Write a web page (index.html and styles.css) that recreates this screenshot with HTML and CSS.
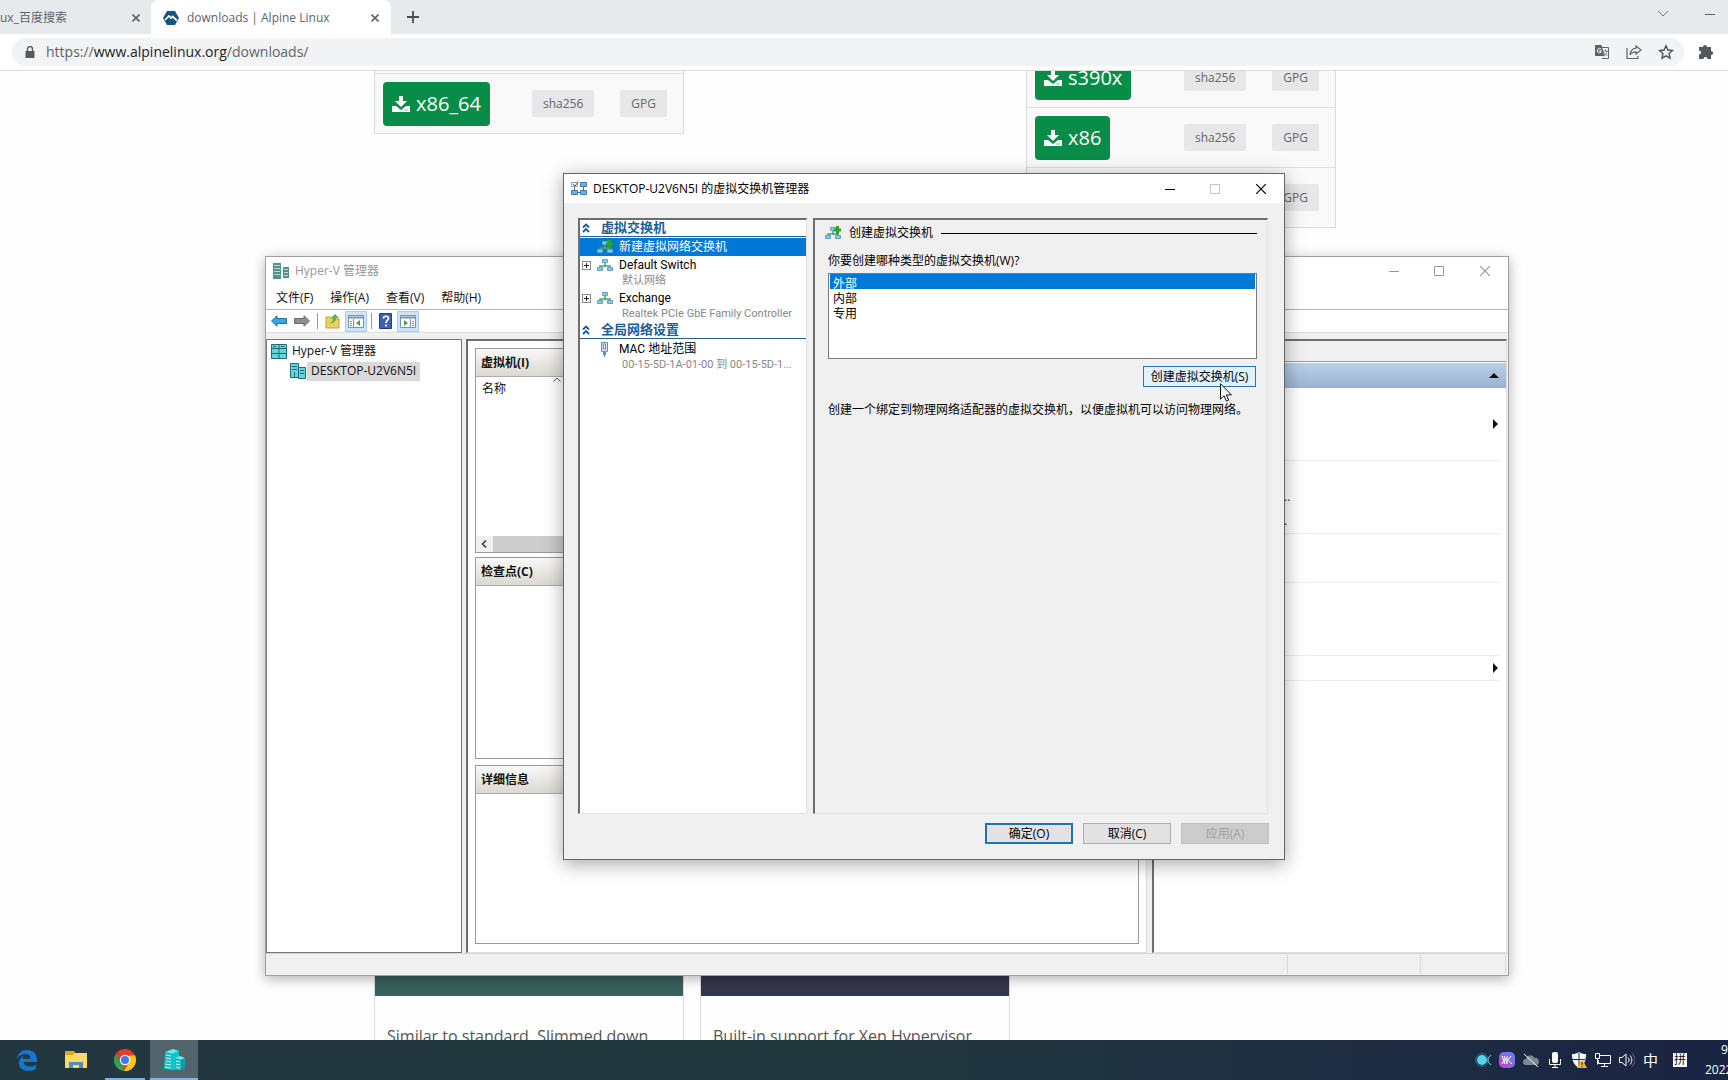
FILE: index.html
```html
<!DOCTYPE html>
<html lang="zh-CN">
<head>
<meta charset="utf-8">
<title>downloads | Alpine Linux</title>
<link rel="stylesheet" href="styles.css">
</head>
<body>
<svg width="0" height="0" class="defs" aria-hidden="true">
  <defs>
    <symbol id="i-close" viewBox="0 0 10 10"><path d="M1 1l8 8M9 1l-8 8" fill="none" stroke="currentColor"/></symbol>
    <symbol id="i-x" viewBox="0 0 8 8"><path d="M0.5 0.5l7 7M7.5 0.5l-7 7" fill="none" stroke="currentColor" stroke-width="1.6"/></symbol>
    <symbol id="i-min" viewBox="0 0 10 10"><path d="M0 5.5h10" stroke="currentColor"/></symbol>
    <symbol id="i-max" viewBox="0 0 10 10"><path d="M.5.5h9v9h-9z" fill="none" stroke="currentColor"/></symbol>
    <symbol id="i-download" viewBox="0 0 18 18"><path d="M7 1h4v5h4L9 12 3 6h4z" fill="currentColor"/><path d="M0 11h4l5 4 5-4h4v6H0z" fill="currentColor"/><path d="M12.500 15h1M14.500 15h1" stroke="#078d47"/></symbol>
    <symbol id="i-switch" viewBox="0 0 16 14"><path d="M8 5v4M3 10V8h10v2" fill="none" stroke="#4fa65c" stroke-width="1.500"/><path d="M5.500 1.500h5v3h-5zM.5 9.500h5v3h-5zM10.500 9.500h5v3h-5z" fill="#8ac6ea" stroke="#5ea3cf"/></symbol>
    <symbol id="i-switch-new" viewBox="0 0 16 14"><path d="M8 5v4M3 10V8h10v2" fill="none" stroke="#4fa65c" stroke-width="1.500"/><path d="M5.500 1.500h5v3h-5zM.5 9.500h5v3h-5zM10.500 9.500h5v3h-5z" fill="#8ac6ea" stroke="#5ea3cf"/><path d="M11 0h3v2.500h2v3h-2V8h-3V5.500H9v-3h2z" fill="#27a52c"/></symbol>
    <symbol id="i-collapse" viewBox="0 0 8 10"><path d="M1 4.500l3-3 3 3M1 9l3-3 3 3" fill="none" stroke="#1b5c93" stroke-width="1.800"/></symbol>
  </defs>
</svg>

<header class="browser">
  <nav class="tabs">
    <div class="tab tab-first"><a href="#">ux_百度搜索</a><button type="button" aria-label="关闭"><svg width="8" height="8"><use href="#i-x"/></svg></button></div>
    <div class="tab tab-active">
      <svg width="16" height="16" viewBox="0 0 16 16"><path d="M4 1h8l4 7-4 7H4L0 8z" fill="#17557c"/><path d="M2 10l4-4 2 2 1.500-1.500L14 10.500" fill="none" stroke="#fff" stroke-width="1.700"/></svg>
      <a href="#">downloads | Alpine Linux</a><button type="button" aria-label="关闭"><svg width="8" height="8"><use href="#i-x"/></svg></button>
    </div>
    <button class="new-tab" type="button" aria-label="新标签页"><svg width="12" height="12" viewBox="0 0 12 12"><path d="M6 0v12M0 6h12" stroke="#4a4d51" stroke-width="1.800"/></svg></button>
    <div class="browser-controls">
      <button type="button" aria-label="搜索标签页"><svg width="12" height="8" viewBox="0 0 12 8"><path d="M1 1l5 5 5-5" fill="none" stroke="#777"/></svg></button>
      <button type="button" aria-label="最小化"><svg width="10" height="10"><use href="#i-min"/></svg></button>
    </div>
  </nav>
  <div class="toolbar">
    <div class="address">
      <svg width="10" height="12" viewBox="0 0 10 12"><path d="M0.500 5h9v7h-9z" fill="#55585c"/><path d="M2.500 5V3a2.500 2.500 0 015 0v2" fill="none" stroke="#55585c" stroke-width="1.400"/></svg>
      <a class="url" href="#">https://<b>www.alpinelinux.org</b>/downloads/</a>
      <button type="button" aria-label="翻译"><svg width="16" height="16" viewBox="0 0 16 16"><path d="M7 3.500h7.500v11H8" fill="none" stroke="#5f6368"/><path d="M9 7h5M11.500 5.500V7M13 7c0 2-2 4-3.500 5M10 8.500l3.500 3.500" fill="none" stroke="#5f6368" stroke-width=".8"/><path d="M1 1h6.500l3 11H1z" fill="#5f6368"/><path d="M7 5a2.200 2.200 0 10.200 3V6.800H5" fill="none" stroke="#fff"/></svg></button>
      <button type="button" aria-label="分享"><svg width="16" height="16" viewBox="0 0 16 16"><path d="M1 4v10.500h11V12" fill="none" stroke="#5f6368" stroke-width="1.200"/><path d="M10 2l5 4-5 4V7.800C7 7.800 5 9 4 11c.3-4 3-6.500 6-6.800z" fill="none" stroke="#5f6368" stroke-width="1.200"/></svg></button>
      <button type="button" aria-label="收藏"><svg width="16" height="16" viewBox="0 0 16 16"><path d="M8 1.800l1.900 4.200 4.600.5-3.400 3.100.9 4.500-4-2.300-4 2.300.9-4.500-3.400-3.100 4.600-.5z" fill="none" stroke="#4c4f54" stroke-width="1.400"/></svg></button>
    </div>
    <button class="extensions" type="button" aria-label="扩展程序"><svg width="16" height="16" viewBox="0 0 16 16"><path d="M5 3a2 2 0 014 0h4v4a2.100 2.100 0 010 4.200V15H9.500a2 2 0 00-4 0H1v-4.500a2 2 0 000-4V3z" fill="#54575c"/></svg></button>
  </div>
</header>

<main class="page">
  <div class="columns">
    <section class="arches arches-end">
      <div class="arch"><a class="download" href="#"><svg width="18" height="18"><use href="#i-download"/></svg>x86_64</a><a class="check check-sha" href="#">sha256</a><a class="check" href="#">GPG</a></div>
    </section>
    <section class="arches arches-last">
      <div class="arch"><a class="download" href="#"><svg width="18" height="18"><use href="#i-download"/></svg>s390x</a><a class="check check-sha" href="#">sha256</a><a class="check" href="#">GPG</a></div>
      <div class="arch"><a class="download" href="#"><svg width="18" height="18"><use href="#i-download"/></svg>x86</a><a class="check check-sha" href="#">sha256</a><a class="check" href="#">GPG</a></div>
      <div class="arch"><a class="check" href="#">GPG</a></div>
    </section>
  </div>
  <div class="columns columns-next">
    <article class="flavor"><div class="banner banner-green"></div><p>Similar to standard. Slimmed down</p></article>
    <article class="flavor"><div class="banner banner-navy"></div><p>Built-in support for Xen Hypervisor.</p></article>
  </div>
</main>

<section class="window manager" aria-label="Hyper-V 管理器">
  <header class="titlebar">
    <svg width="16" height="16" viewBox="0 0 16 16"><path d="M0 0h8v16H0z" fill="#5a8f89"/><path d="M10 4h6v11h-6z" fill="#5a8f89"/><path d="M1 2.500h6M1 5.500h6M1 8.500h6M1 11.500h6M11 6.500h4M11 9.500h4M11 12.500h4" stroke="#b9dcd8"/></svg>
    <h1>Hyper-V 管理器</h1>
    <div class="controls">
      <button type="button" aria-label="最小化"><svg width="10" height="10"><use href="#i-min"/></svg></button>
      <button type="button" aria-label="最大化"><svg width="10" height="10"><use href="#i-max"/></svg></button>
      <button type="button" aria-label="关闭"><svg width="12" height="12"><use href="#i-close"/></svg></button>
    </div>
  </header>
  <nav class="menu"><button type="button">文件(F)</button><button type="button">操作(A)</button><button type="button">查看(V)</button><button type="button">帮助(H)</button></nav>
  <div class="tools">
    <button type="button" aria-label="后退"><svg width="16" height="12" viewBox="0 0 16 12"><path d="M.5 6L6 .8V3.500h9.500v5H6v2.700z" fill="#39a5e8" stroke="#276da5"/></svg></button>
    <button type="button" aria-label="前进"><svg width="16" height="12" viewBox="0 0 16 12"><path d="M15.500 6L10 .8V3.500H.5v5H10v2.700z" fill="#8e8e8e" stroke="#6a6a6a"/></svg></button>
    <i class="sep"></i>
    <button type="button" aria-label="向上"><svg width="16" height="16" viewBox="0 0 16 16"><path d="M1 4h5l1 2h7v9H1z" fill="#f0cf62" stroke="#c29d3d"/><path d="M3 10c4 0 5-2 5-5H6l4-4 4 4h-3c0 4-3 6-8 5z" fill="#58b646"/></svg></button>
    <button class="on" type="button" aria-label="显示/隐藏控制台树"><svg width="16" height="13" viewBox="0 0 16 13"><path d="M.5.5h15v12H.5z" fill="#fff" stroke="#7f93a8"/><path d="M0 2.500h16" stroke="#7f93a8" stroke-width="2"/><path d="M5.500 4v8M2 6.500h2M2 8.500h2M2 10.500h2" stroke="#7f93a8"/><path d="M12 5v6L8 8z" fill="#45a04a"/></svg></button>
    <i class="sep"></i>
    <button type="button" aria-label="帮助"><svg width="14" height="16" viewBox="0 0 14 16"><path d="M.5.500h12v15H.5z" fill="#4160b4" stroke="#263b84"/><path d="M4.500 5.500c0-3 5-3 5 0 0 2-2.500 2-2.500 4.500M7 11.500v2" fill="none" stroke="#fff" stroke-width="1.700"/></svg></button>
    <button class="on" type="button" aria-label="显示/隐藏操作窗格"><svg width="16" height="13" viewBox="0 0 16 13"><path d="M.5.5h15v12H.5z" fill="#fff" stroke="#7f93a8"/><path d="M0 2.500h16" stroke="#7f93a8" stroke-width="2"/><path d="M10.500 4v8M12 6.500h2M12 8.500h2M12 10.500h2" stroke="#7f93a8"/><path d="M4 5v6l4-3z" fill="#45a04a"/></svg></button>
  </div>
  <div class="panes">
    <ul class="tree">
      <li><svg width="16" height="16" viewBox="0 0 16 16"><path d="M.5 1.500h15v14H.5z" fill="#5fd9dd" stroke="#27666f"/><path d="M8 1v15M.5 5.500h15M.5 10.500h15M2 3.500h3M10 3.500h3" stroke="#27666f"/></svg><span>Hyper-V 管理器</span></li>
      <li class="leaf"><svg width="16" height="16" viewBox="0 0 16 16"><path d="M.5.500h8v14h-8zM8.500 4.500h7v11h-7z" fill="#5fd9dd" stroke="#27666f"/><path d="M2 3.500h5M2 6.500h5M10 7.500h4M10 10.500h4M4.500 9v5" stroke="#27666f"/></svg><span class="selected">DESKTOP-U2V6N5I</span></li>
    </ul>
    <div class="center">
      <section class="box"><h2>虚拟机(I)</h2><div class="column-head">名称</div><svg class="sort" width="8" height="5" viewBox="0 0 8 5"><path d="M.5 4.500L4 1l3.500 3.500" fill="none" stroke="#555"/></svg>
        <div class="scroll"><svg width="6" height="8" viewBox="0 0 6 8"><path d="M5 .5L1.500 4 5 7.500" fill="none" stroke="#444" stroke-width="1.700"/></svg><i></i></div></section>
      <section class="box"><h2>检查点(C)</h2></section>
      <section class="box"><h2>详细信息</h2></section>
    </div>
    <aside class="actions">
      <div class="actions-head"></div>
      <div class="actions-bar"><svg width="10" height="5" viewBox="0 0 10 5"><path d="M5 0l5 5H0z" fill="#111"/></svg></div>
      <ul><li></li><li><svg width="5" height="10" viewBox="0 0 5 10"><path d="M0 0l5 5-5 5z" fill="#111"/></svg></li><li></li></ul>
      <ul><li></li><li><span class="cut">..</span></li><li><span class="cut">.</span></li></ul>
      <ul><li></li><li></li></ul>
      <ul><li></li><li></li><li></li></ul>
      <ul><li><svg width="5" height="10" viewBox="0 0 5 10"><path d="M0 0l5 5-5 5z" fill="#111"/></svg></li></ul>
    </aside>
  </div>
  <footer class="status"><i></i><i></i><i></i></footer>
</section>

<section class="window dialog" role="dialog" aria-label="虚拟交换机管理器">
  <header class="titlebar">
    <svg width="16" height="15" viewBox="0 0 16 15"><path d="M9.500 1.500h6v4h-6zM.5 9.500h6v4h-6zM9.500 9.500h6v4h-6z" fill="#69b4e4" stroke="#3f7ba8"/><path d="M.5 1.500h6v4h-6z" fill="#fff" stroke="#8aa4b8"/><path d="M2 3l2 2 3.500-4.500" fill="none" stroke="#555"/><path d="M3.500 6v3M12.500 6v3M7 11.500h2" stroke="#3f7ba8"/></svg>
    <h1>DESKTOP-U2V6N5I 的虚拟交换机管理器</h1>
    <div class="controls">
      <button type="button" aria-label="最小化"><svg width="10" height="10"><use href="#i-min"/></svg></button>
      <button type="button" aria-label="最大化" disabled><svg width="10" height="10"><use href="#i-max"/></svg></button>
      <button type="button" aria-label="关闭"><svg width="12" height="12"><use href="#i-close"/></svg></button>
    </div>
  </header>
  <div class="dialog-body">
    <div class="dialog-panes">
      <nav class="switches">
        <h2><svg width="8" height="10"><use href="#i-collapse"/></svg>虚拟交换机</h2>
        <div class="item item-on"><i></i><svg width="16" height="14"><use href="#i-switch-new"/></svg><span>新建虚拟网络交换机</span></div>
        <div class="item"><i class="plus"></i><svg width="16" height="14"><use href="#i-switch"/></svg><span>Default Switch</span></div>
        <p>默认网络</p>
        <div class="item"><i class="plus"></i><svg width="16" height="14"><use href="#i-switch"/></svg><span>Exchange</span></div>
        <p>Realtek PCIe GbE Family Controller</p>
        <h2><svg width="8" height="10"><use href="#i-collapse"/></svg>全局网络设置</h2>
        <div class="item"><i></i><svg width="16" height="16" viewBox="0 0 16 16"><path d="M4.500 1.500h6v9h-6z" fill="#d5dde8" stroke="#7d8ba3"/><path d="M6.500 3h2v5h-2z" fill="#fff" stroke="#7d8ba3"/><path d="M6 11h3v3H6z" fill="#4d93bb"/><path d="M7.500 14v2" stroke="#4d93bb"/></svg><span>MAC 地址范围</span></div>
        <p>00-15-5D-1A-01-00 到 00-15-5D-1...</p>
      </nav>
      <form class="create" id="create">
        <h3><svg width="16" height="14"><use href="#i-switch-new"/></svg>创建虚拟交换机</h3>
        <label for="kind">你要创建哪种类型的虚拟交换机(W)?</label>
        <select id="kind" size="5"><option selected>外部</option><option>内部</option><option>专用</option></select>
        <button class="btn btn-hot" type="button">创建虚拟交换机(S)</button>
        <p>创建一个绑定到物理网络适配器的虚拟交换机，以便虚拟机可以访问物理网络。</p>
      </form>
    </div>
    <footer class="buttons">
      <button class="btn btn-default" type="button">确定(O)</button>
      <button class="btn" type="button">取消(C)</button>
      <button class="btn" type="button" disabled>应用(A)</button>
    </footer>
  </div>
</section>

<footer class="taskbar">
  <button class="task" type="button" aria-label="Edge"><svg width="22" height="22" viewBox="0 0 22 22"><path d="M1 9.500C2 4 6 1 11 1c6 0 10 4 10 10v2H7.500c.3 3 3 4.500 6.500 4.500 2.500 0 4.500-.7 6-1.500v4c-2 1.200-4.500 1.800-7.500 1.800C6.500 21.800 3 18.500 3 14c0-3.500 2-6 5-7.500-1 1-1.300 2-1.400 3.200h7.900c0-3-1.500-4.700-4.500-4.700C6.500 5 3 6.500 1 9.500z" fill="#1478d0"/></svg></button>
  <button class="task" type="button" aria-label="文件资源管理器"><svg width="22" height="18" viewBox="0 0 22 18"><path d="M0 0h9l1 2h12v15H0z" fill="#ffd866"/><path d="M0 0h9l1 2-2 2H0z" fill="#e0a526"/><path d="M4 17v-6h14v6h-4v-3H8v3z" fill="#4c8ebd"/></svg></button>
  <button class="task task-open" type="button" aria-label="Chrome"><svg width="22" height="22" viewBox="0 0 22 22"><circle cx="11" cy="11" r="11" fill="#e33b2e"/><path d="M1.500 5.500L8 15l3 7A11 11 0 011.500 5.500z" fill="#2da24e"/><path d="M21 6.500A11 11 0 0110 22l5-8 0-7.500z" fill="#fbc915"/><circle cx="11" cy="11" r="5.200" fill="#fff"/><circle cx="11" cy="11" r="4.100" fill="#3f7be8"/></svg></button>
  <button class="task task-open task-active" type="button" aria-label="Hyper-V"><svg width="22" height="22" viewBox="0 0 22 22"><path d="M2 3l8-3 6 2-7 3z" fill="#6fe9ea"/><path d="M2 3l7 2v16l-8-1z" fill="#19b9c1"/><path d="M9 5l7-3v7l-4 2v10H9z" fill="#0fc8ce"/><path d="M12 9l5-2 5 2-4 2z" fill="#6fe9ea"/><path d="M12 9l6 2v10h-6z" fill="#19b9c1"/><path d="M18 11l4-2v10l-4 2z" fill="#0b9fa8"/><path d="M3 6l5 1M3 9l5 1M3 12l5 1M2 15l6 1M2 18l6 1M13 12l4 1M13 15l4 1M13 18l4 1" stroke="#c9fbfb"/></svg></button>
  <div class="tray">
    <svg width="16" height="16" viewBox="0 0 16 16"><circle cx="7" cy="8" r="5" fill="#58d2ea"/><circle cx="7" cy="8" r="6.300" fill="none" stroke="#2d7f96"/><path d="M16 3l-3 3v4l3 3" fill="none" stroke="#58d2ea"/></svg>
    <svg width="16" height="16" viewBox="0 0 16 16"><defs><linearGradient id="g" x1="0" x2="1" y1="1" y2="0"><stop stop-color="#d43cc8"/><stop offset="1" stop-color="#4f8be8"/></linearGradient></defs><rect width="16" height="16" rx="5" fill="url(#g)"/><path d="M3 4l3 8M5 4l3 7M8 4v8M12 4l-3 4 4 4M3 12l4-6" stroke="#fff" fill="none"/></svg>
    <svg width="16" height="16" viewBox="0 0 16 16"><path d="M3 13a3 3 0 010-6 4.500 4.500 0 018.500-1A3.500 3.500 0 0113 13z" fill="#7c8594"/><path d="M1 2l14 13" stroke="#fff"/></svg>
    <svg width="16" height="16" viewBox="0 0 16 16"><rect x="5" y="0" width="6" height="11" rx="2" fill="#fff"/><path d="M2.500 7v5.500h11V7M8 12v3M5 15.500h6" fill="none" stroke="#fff"/></svg>
    <svg width="16" height="16" viewBox="0 0 16 16"><path d="M8 0c2 1.500 4 2 7 2 0 7-2 11-7 14C3 13 1 9 1 2c3 0 5-.5 7-2z" fill="#fff"/><path d="M8 1v14M1 7.500h13" stroke="#1b2942"/><path d="M11 7l5 9H6z" fill="#f6b81c"/><path d="M11 10v3M11 14v1" stroke="#222"/></svg>
    <svg width="16" height="16" viewBox="0 0 16 16"><path d="M4 3.500h11.500v8H3.500v-3M9.500 12v2.500M6 14.500h7M.5 1.500h4v5h-4zM2.500 7v5.500" fill="none" stroke="#fff"/></svg>
    <svg width="16" height="16" viewBox="0 0 16 16"><path d="M.5 5.500h2.500l4-3.500v12L3 10.500H.5z" fill="none" stroke="#fff"/><path d="M9 5.500c1.500 1.500 1.500 3.500 0 5M11 3.500c2.500 2.500 2.500 6.500 0 9" fill="none" stroke="#fff"/><path d="M13 1.500c4 4 4 9 0 13" fill="none" stroke="#66708a"/></svg>
    <span class="lang">中</span>
    <span class="ime">拼</span>
  </div>
  <time class="clock"><span>9</span><span>2022</span></time>
</footer>

<svg class="pointer" width="12" height="19" viewBox="0 0 12 19" aria-hidden="true"><path d="M.5.700v15.500l3.600-3.400 2.300 5.300 2.300-1-2.300-5.200h5z" fill="#fff" stroke="#111"/></svg>
</body>
</html>
```
FILE: styles.css
```css
* { box-sizing: border-box; }
body {
  margin: 0;
  height: 100vh;
  display: flex;
  flex-direction: column;
  position: relative;
  overflow: hidden;
  background: #fefefe;
  color: #111;
  font: 12px/16px "Open Sans", "Noto Sans CJK SC", sans-serif;
}
button { font: inherit; color: inherit; border: 0; padding: 0; background: none; display: flex; align-items: center; justify-content: center; }
a { color: inherit; text-decoration: none; }
svg { display: block; flex: none; }
h1, h2, h3, p, ul { margin: 0; padding: 0; list-style: none; font-size: inherit; font-weight: normal; }
.defs { position: absolute; }

/* browser */
.browser { flex: none; border-bottom: 1px solid #d9dadc; background: #fff; color: #5f6368; }
.tabs { display: flex; height: 34px; background: #e7eaed; }
.tab { display: flex; align-items: center; gap: 8px; padding: 2px 12px 0; }
.tab a { flex: 1; white-space: nowrap; }
.tab-first { width: 151px; padding: 2px 11px 0 0; }
.tab-active { width: 240px; background: #fff; border-radius: 8px 8px 0 0; }
.new-tab { margin-left: 16px; }
.browser-controls { display: flex; gap: 36px; margin-left: auto; padding: 0 13px 6px 0; }
.toolbar { display: flex; align-items: center; height: 36px; padding: 0 14px 0 12px; gap: 14px; }
.address { flex: 1; display: flex; align-items: center; gap: 16px; height: 28px; padding: 0 10px 0 13px; border-radius: 14px; background: #f2f3f5; }
.url { flex: 1; font-size: 14px; line-height: 20px; margin-left: -5px; padding-bottom: 1px; }
.url b { font-weight: normal; color: #202124; }

/* page */
.page { flex: 1; min-height: 0; overflow: hidden; display: flex; flex-direction: column; justify-content: space-between; padding-right: 18px; }
.columns { display: grid; grid-template-columns: repeat(3, 310px); gap: 16px; justify-content: center; align-items: start; }
.arches { border: 1px solid #dcdcdc; border-top: 0; background: #f9f9f9; }
.arches-end { padding-top: 2px; }
.arches-last { grid-column: 3; margin-top: -24px; }
.arch { display: flex; align-items: center; justify-content: flex-end; gap: 26px; height: 60px; padding: 0 16px 0 8px; border-top: 1px solid #e0e0e0; }
.download { display: flex; align-items: center; gap: 6px; height: 44px; padding: 0 9px; margin-right: auto; border-radius: 4px; background: #078d47; color: #fff; font-size: 20px; line-height: 24px; }
.check { padding: 6px 11px 5px; border-radius: 2px; background: #e7e7e9; color: #666; }
.columns-next { height: 66px; }
.flavor { border: 1px solid #dcdcdc; border-width: 0 1px; }
.banner { height: 22px; }
.banner-green { background: #38605c; }
.banner-navy { background: #34364c; }
.flavor p { padding: 28px 12px 0; font-size: 16px; line-height: 24px; color: #555; white-space: nowrap; }

/* windows */
.window { position: absolute; display: flex; flex-direction: column; }
.titlebar { display: flex; align-items: center; flex: none; height: 29px; padding: 0 17px 0 7px; gap: 6px; background: #fff; }
.titlebar h1 { flex: 1; white-space: nowrap; }
.controls { display: flex; gap: 35px; }

.manager { inset: 256px 219px 104px 265px; border: 1px solid #a0a0a0; background: #f0f0f0; box-shadow: 0 3px 12px rgba(0, 0, 0, .3); }
.manager .titlebar { height: 27px; color: #999; }
.menu { display: flex; gap: 17px; padding: 6px 10px 3px; background: #fff; border-bottom: 1px solid #b5b5b5; }
.tools { display: flex; align-items: center; gap: 7px; flex: none; height: 23px; padding-left: 5px; background: #fff; border-bottom: 1px solid #ddd; }
.tools .sep { width: 1px; height: 16px; background: #999; }
.tools .on { width: 22px; height: 21px; margin: 0 -3px; background: #cde4f7; border: 1px solid #a8d0ee; }
.panes { flex: 1; min-height: 0; display: grid; grid-template-columns: 196px 1fr 356px; gap: 4px; padding-top: 6px; }
.tree { background: #fff; border: 1px solid #777; padding: 1px 4px; }
.tree li { display: flex; align-items: center; gap: 5px; height: 20px; }
.tree .leaf { padding-left: 19px; gap: 1px; }
.selected { padding: 1px 4px 2px; background: #d9d9d9; }
.center { display: grid; grid-template-rows: 205px 202px 1fr; row-gap: 4px; margin-right: 1px; padding: 7px 7px 8px 7px; background: #fff; border: 2px solid #6e6e6e; border-width: 2px 1px 1px 2px; border-right-color: #ddd; border-bottom-color: #ddd; }
.box { display: flex; flex-direction: column; border: 1px solid #9a9a9a; }
.box + .box + .box { margin-top: 2px; }
.box h2 { height: 28px; padding: 6px 5px; font-weight: bold; background: linear-gradient(#f9f9f8, #dbd8d1); border-bottom: 1px solid #b0aeaa; }
.column-head { padding: 4px 6px; }
.sort { margin: -24px 0 0 77px; }
.scroll { display: flex; align-items: center; gap: 6px; height: 16px; margin-top: auto; padding-left: 5px; background: #f0f0f0; }
.scroll i { width: 360px; height: 16px; background: #cdcbcd; }
.actions { background: #fff; border: 1px solid #ddd; border-left: 2px solid #6e6e6e; border-top: 2px solid #6e6e6e; margin-right: 1px; }
.actions-head { height: 21px; background: #f0f0f0; border-bottom: 1px solid #999; }
.actions-bar { display: flex; align-items: center; justify-content: flex-end; height: 26px; padding-right: 7px; background: linear-gradient(#b9cfe6, #9ab3d1); border-top: 1px solid #fff; }
.actions ul { margin-right: 6px; border-bottom: 1px solid #ececec; }
.actions li { display: flex; align-items: center; justify-content: space-between; height: 24px; padding: 0 2px 0 130px; }
.actions li svg { margin-left: auto; }
.cut { color: #222; }
.status { flex: none; display: flex; justify-content: flex-end; height: 22px; padding: 1px 2px; border-top: 1px solid #d5d5d5; }
.status i { width: 85px; border-right: 1px solid #d8d8d8; }
.status i:nth-child(2) { width: 133px; }

.dialog { inset: 173px 443px 220px 563px; border: 1px solid #666; background: #f0f0f0; box-shadow: 0 4px 18px rgba(0, 0, 0, .35); color: #000; }
.dialog .controls :disabled { color: #c4c4c4; }
.dialog-body { flex: 1; display: flex; flex-direction: column; padding: 15px 15px 15px 14px; }
.dialog-panes { flex: 1; display: grid; grid-template-columns: 229px 1fr; gap: 6px; padding-right: 1px; }
.switches, .create { border: 1px solid #e2e2e2; border-top: 2px solid #6e6e6e; border-left: 2px solid #6e6e6e; }
.switches { background: #fff; font: 11px/16px Roboto, "Noto Sans CJK SC", sans-serif; }
.switches h2 { display: flex; align-items: center; gap: 11px; height: 17px; padding-left: 2px; margin-bottom: 1px; border-bottom: 1px solid #2b5f8b; color: #1b5c93; font-size: 13px; font-weight: bold; }
.item { display: flex; align-items: center; gap: 6px; height: 18px; padding-left: 2px; }
.item i { width: 9px; height: 9px; }
.item .plus { border: 1px solid #888; background: linear-gradient(#222, #222) center/5px 1px no-repeat, linear-gradient(#222, #222) center/1px 5px no-repeat; }
.item span { font-size: 12px; }
.item-on { background: #0078d7; color: #fff; }
.switches p { height: 15px; padding-left: 42px; line-height: 14px; color: #888; white-space: nowrap; }
.create { display: flex; flex-direction: column; align-items: stretch; padding: 4px 10px 0 13px; }
.create h3 { display: flex; align-items: center; gap: 8px; margin-left: -3px; height: 18px; }
.create h3::after { content: ""; flex: 1; height: 1px; background: #000; }
.create label { margin: 11px 0 4px; }
select { width: 100%; height: 86px; padding: 0 1px; border: 1px solid #7a7a7a; border-radius: 0; background: #fff; outline: 0; overflow: hidden; font: inherit; color: #000; }
option { height: 15px; min-height: 15px; padding: 0 3px; line-height: 15px; }
option:checked { background: #0078d7 linear-gradient(#0078d7, #0078d7); color: #fff; }
.btn { width: 88px; height: 21px; border: 1px solid #adadad; background: #e3e1e4; }
.btn:disabled { background: #ccc; border-color: #bfbfbf; color: #a0a0a0; }
.btn-default { border: 2px solid #1f74ab; }
.btn-hot { width: 113px; margin: 7px 1px 0 auto; border-color: #2a77ad; background: #e2f1fb; }
.create p { margin-top: 15px; white-space: nowrap; }
.buttons { display: flex; justify-content: flex-end; gap: 10px; padding-top: 9px; }

/* taskbar */
.taskbar { flex: none; display: flex; align-items: center; height: 40px; padding-left: 3px; gap: 1px; background: linear-gradient(90deg, #22373f, #22383f 50%, #1a2443); color: #fff; }
.task { width: 48px; height: 40px; }
.task-open { background: linear-gradient(#7fb2e0, #7fb2e0) center bottom/40px 2px no-repeat; }
.task-active { background: linear-gradient(#7fb2e0, #7fb2e0) center bottom/48px 2px no-repeat, #52656c; }
.tray { display: flex; align-items: center; gap: 8px; margin-left: auto; }
.lang { font-size: 15px; }
.ime { width: 14px; height: 14px; margin: 0 17px 0 7px; background: #fff; color: #111; line-height: 14px; text-align: center; }
.clock { width: 23px; overflow: hidden; line-height: 20px; white-space: nowrap; }
.clock span { display: block; }
.clock span:first-child { padding-left: 16px; }

.pointer { position: absolute; left: 1220px; top: 383px; }
```
